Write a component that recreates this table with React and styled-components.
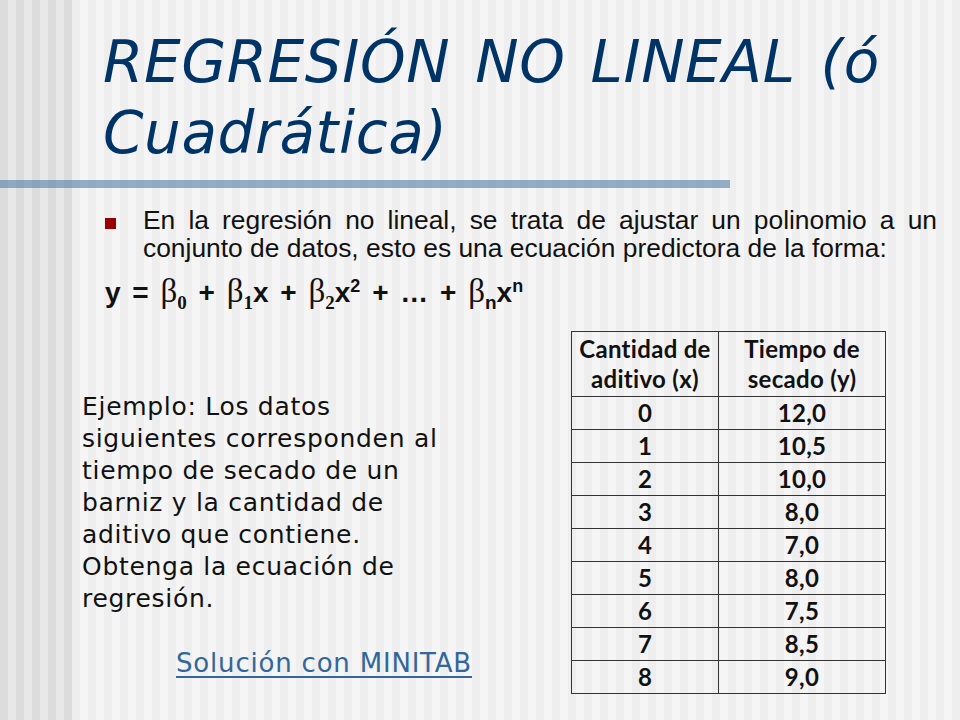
import React from "react";
import styled, { createGlobalStyle } from "styled-components";

const Global = createGlobalStyle`
  html, body {
    margin: 0;
    padding: 0;
  }
  body {
    width: 960px;
    height: 720px;
    overflow: hidden;
  }
`;

const Slide = styled.div`
  width: 960px;
  height: 720px;
  box-sizing: border-box;
  overflow: hidden;
  background-color: #f5f5f5;
  background-image:
    repeating-linear-gradient(90deg, #dcdcdc 0 8px, #e8e8e8 8px 16px),
    repeating-linear-gradient(90deg, #f5f5f5 0 8px, #eeeeee 8px 16px);
  background-size: 72px 100%, 100% 100%;
  background-repeat: no-repeat;
  padding-top: 27px;
`;

const Title = styled.h1`
  margin: 0 0 0 103px;
  font-family: "DejaVu Sans", Verdana, sans-serif;
  font-style: italic;
  font-weight: normal;
  font-size: 58px;
  line-height: 71px;
  letter-spacing: 0.6px;
  word-spacing: 6px;
  color: #003366;
  width: 820px;
`;

const Rule = styled.div`
  margin-top: 11px;
  width: 730px;
  height: 8px;
  background: rgba(92, 132, 172, 0.64);
`;

const Body = styled.div`
  padding: 18px 23px 0 105px;
`;

const Bullet = styled.div`
  display: flex;
  gap: 27px;
  align-items: flex-start;
`;

const Square = styled.span`
  flex: none;
  width: 11px;
  height: 11px;
  margin-top: 12px;
  background: #990000;
`;

const BulletText = styled.p`
  margin: 0;
  font-family: "Liberation Sans", Arial, sans-serif;
  font-size: 26.4px;
  line-height: 28px;
  text-align: justify;
  color: #111;
`;

const Formula = styled.div`
  margin-top: 14px;
  font-family: "Liberation Sans", Arial, sans-serif;
  font-weight: bold;
  font-size: 28px;
  line-height: 30px;
  word-spacing: 4px;
  color: #111;

  sup {
    font-size: 18px;
    line-height: 0;
  }
  sub {
    font-size: 19px;
    line-height: 0;
  }
`;

const Beta = styled.span`
  font-family: "Liberation Serif", "Times New Roman", serif;
  font-weight: normal;
  font-size: 33px;
`;

const SerifSub = styled.sub`
  font-family: "Liberation Serif", "Times New Roman", serif;
`;

const Lower = styled.div`
  display: flex;
  align-items: flex-start;
  margin-top: 23px;
  padding-left: 82px;
`;

const Example = styled.div`
  width: 390px;
  padding-top: 60px;
  display: flex;
  flex-direction: column;
`;

const ExampleText = styled.p`
  margin: 0;
  font-family: "DejaVu Sans", Verdana, sans-serif;
  font-size: 25px;
  letter-spacing: 0.7px;
  line-height: 32px;
  color: #111;
  white-space: nowrap;
`;

const Link = styled.a`
  align-self: flex-end;
  margin-top: 32px;
  font-family: "DejaVu Sans", Verdana, sans-serif;
  font-size: 26px;
  line-height: 32px;
  letter-spacing: 0.8px;
  color: #336699;
  text-decoration: underline;
  text-underline-offset: 4px;
  white-space: nowrap;
`;

const Table = styled.table`
  margin-left: 99px;
  border-collapse: collapse;
  font-family: Lato, "Liberation Sans", sans-serif;
  font-weight: bold;
  font-size: 24px;
  letter-spacing: 0.3px;
  color: #111;
`;

const Cell = styled.td`
  border: 1.5px solid #333;
  text-align: center;
  padding: 0;
  height: ${(p) => (p.$head ? 64 : 32)}px;
  width: ${(p) => p.$w}px;
  line-height: 30px;
`;

const rows = [
  ["0", "12,0"],
  ["1", "10,5"],
  ["2", "10,0"],
  ["3", "8,0"],
  ["4", "7,0"],
  ["5", "8,0"],
  ["6", "7,5"],
  ["7", "8,5"],
  ["8", "9,0"],
];

const lines = [
  "Ejemplo: Los datos",
  "siguientes corresponden al",
  "tiempo de secado de un",
  "barniz y la cantidad de",
  "aditivo que contiene.",
  "Obtenga la ecuación de",
  "regresión.",
];

export default function App() {
  return (
    <Slide>
      <Global />
      <Title>REGRESIÓN NO LINEAL (ó Cuadrática)</Title>
      <Rule />
      <Body>
        <Bullet>
          <Square />
          <BulletText>
            En la regresión no lineal, se trata de ajustar un polinomio a un
            conjunto de datos, esto es una ecuación predictora de la forma:
          </BulletText>
        </Bullet>
        <Formula>
          y = <Beta>β</Beta><SerifSub>0</SerifSub> + <Beta>β</Beta>
          <SerifSub>1</SerifSub>x + <Beta>β</Beta><SerifSub>2</SerifSub>x
          <sup>2</sup> + … + <Beta>β</Beta><sub>n</sub>x<sup>n</sup>
        </Formula>
      </Body>
      <Lower>
        <Example>
          <ExampleText>
            {lines.map((l, i) => (
              <React.Fragment key={i}>
                {l}
                {i < lines.length - 1 && <br />}
              </React.Fragment>
            ))}
          </ExampleText>
          <Link href="#">Solución con MINITAB</Link>
        </Example>
        <Table>
          <tbody>
            <tr>
              <Cell $head $w={146}>Cantidad de<br />aditivo (x)</Cell>
              <Cell $head $w={166}>Tiempo de<br />secado (y)</Cell>
            </tr>
            {rows.map((r, i) => (
              <tr key={i}>
                <Cell>{r[0]}</Cell>
                <Cell>{r[1]}</Cell>
              </tr>
            ))}
          </tbody>
        </Table>
      </Lower>
    </Slide>
  );
}
